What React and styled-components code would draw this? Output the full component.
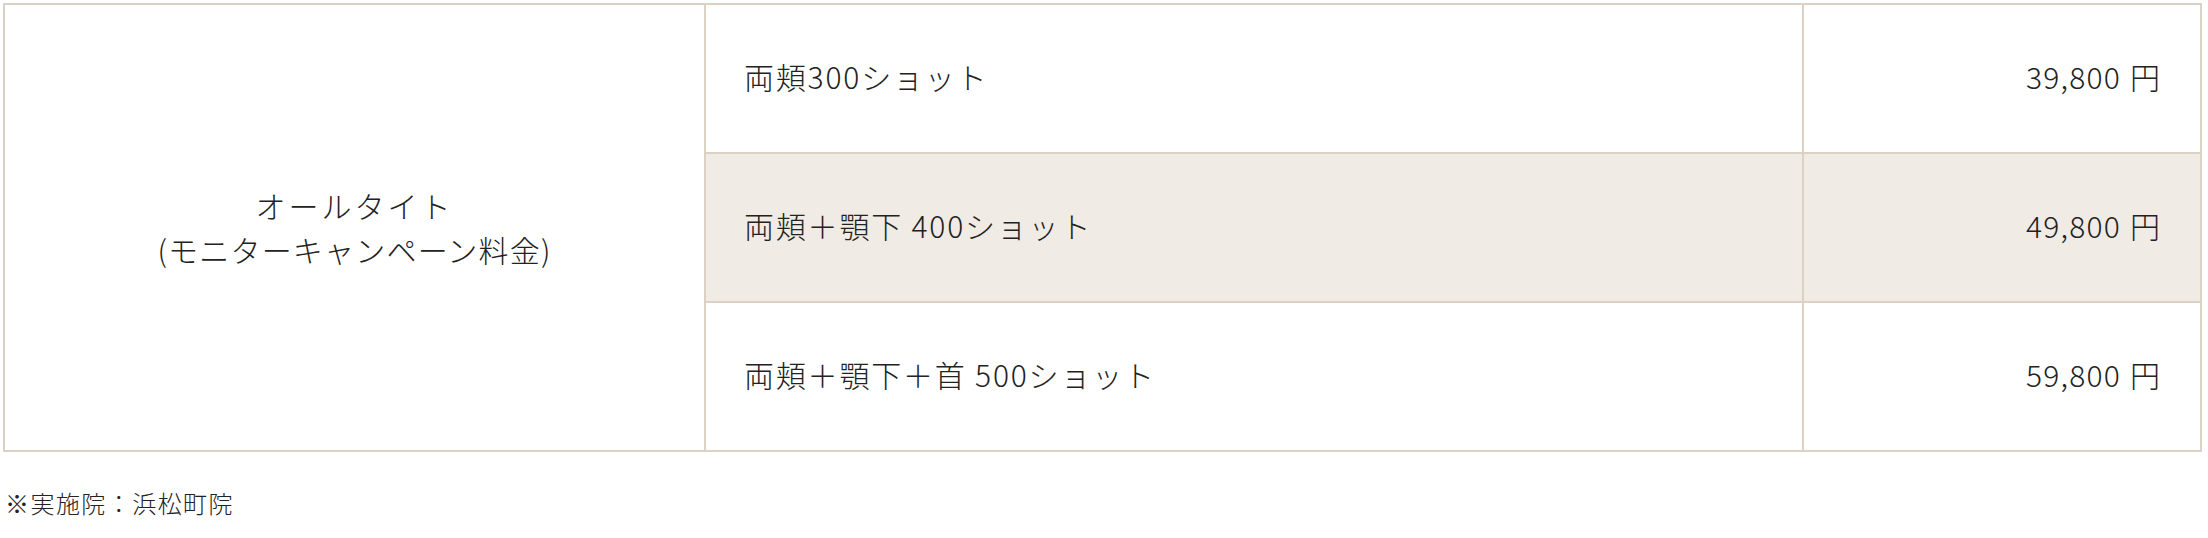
import React from 'react';
import styled, { createGlobalStyle } from 'styled-components';

const GlobalStyle = createGlobalStyle`
  body {
    margin: 0;
    background: #fff;
    color: #222;
    font-family: "Noto Sans CJK JP", "Noto Sans", sans-serif;
    font-weight: 300;
  }
`;

const plans = [
  { id: 1, name: '両頬300ショット', price: '39,800', shaded: false },
  { id: 2, name: '両頬＋顎下 400ショット', price: '49,800', shaded: true },
  { id: 3, name: '両頬＋顎下＋首 500ショット', price: '59,800', shaded: false },
];

const App = () => {
  return (
    <>
      <GlobalStyle />
      <Page>
        <PriceGrid>
          <Course>
            <CourseTitle>オールタイト</CourseTitle>
            <CourseNote>(モニターキャンペーン料金)</CourseNote>
          </Course>
          {plans.map((plan, i) => (
            <React.Fragment key={plan.id}>
              <PlanName $shaded={plan.shaded} style={{ gridRow: i + 1 }}>
                {plan.name}
              </PlanName>
              <PlanPrice $shaded={plan.shaded} style={{ gridRow: i + 1 }}>
                {plan.price}
                <Yen>円</Yen>
              </PlanPrice>
            </React.Fragment>
          ))}
        </PriceGrid>
        <Note>※実施院：浜松町院</Note>
      </Page>
    </>
  );
};

const Page = styled.div`
  padding: 3px 6px 0 3px;
`;

const PriceGrid = styled.div`
  display: grid;
  grid-template-columns: 699px 1096px 396px;
  grid-template-rows: repeat(3, 147px);
  gap: 2px;
  padding: 2px;
  width: max-content;
  background: #ddd1c6;
`;

const Course = styled.div`
  grid-column: 1;
  grid-row: 1 / span 3;
  background: #fff;
  display: flex;
  flex-direction: column;
  align-items: center;
  justify-content: center;
  padding-bottom: 2px;
  font-size: 30px;
  line-height: 44px;
`;

const CourseTitle = styled.span`
  letter-spacing: 0.1em;
`;

const CourseNote = styled.span`
  letter-spacing: 0.04em;
`;

const Cell = styled.div`
  background: ${(p) => (p.$shaded ? '#f0ebe5' : '#fff')};
  display: flex;
  align-items: center;
  padding-bottom: 5px;
  font-size: 30px;
  letter-spacing: 0.06em;
`;

const PlanName = styled(Cell)`
  grid-column: 2;
  padding-left: 38px;
`;

const PlanPrice = styled(Cell)`
  grid-column: 3;
  justify-content: flex-end;
  padding-right: 40px;
  letter-spacing: 0.04em;
`;

const Yen = styled.span`
  margin-left: 9px;
  letter-spacing: 0;
`;

const Note = styled.p`
  margin: 33px 0 0 2px;
  font-size: 24px;
  line-height: 36px;
  letter-spacing: 0.06em;
`;

export default App;
